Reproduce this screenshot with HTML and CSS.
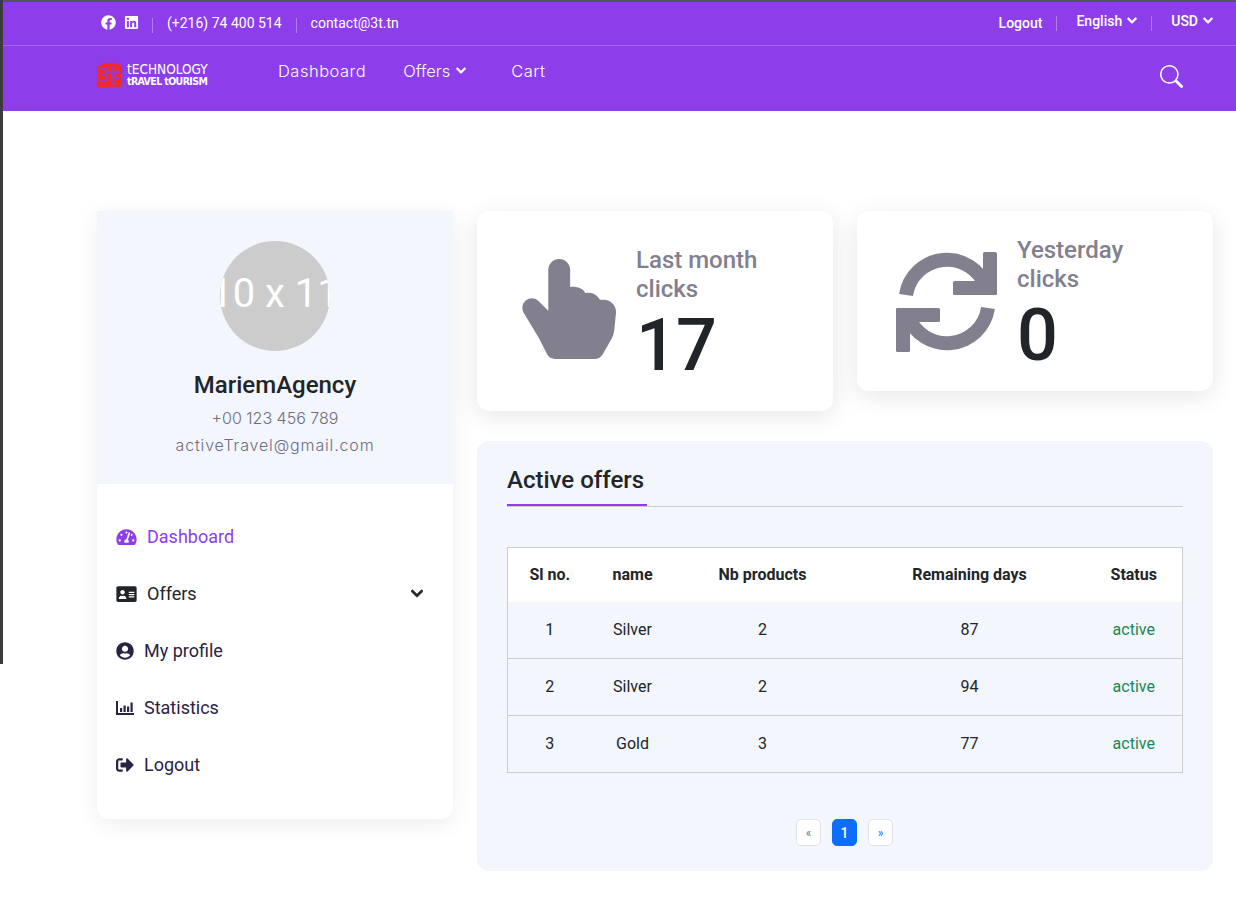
FILE: index.html
```html
<!DOCTYPE html>
<html>
<head>
	<meta name="viewport" content="width=device-width, initial-scale=1">
	<title>Dashboard</title>
	<link rel="stylesheet" href="styles.css">
</head>
<body>
	<div class="page-edge"></div>

	<header class="site-header">
		<div class="topbar">
			<div class="topbar-left">
				<svg class="social" viewBox="0 0 512 512"><path d="M504 256C504 119 393 8 256 8S8 119 8 256c0 123.78 90.69 226.38 209.25 245V327.69h-63V256h63v-54.64c0-62.15 37-96.48 93.67-96.48 27.14 0 55.52 4.84 55.52 4.84v61h-31.28c-30.8 0-40.41 19.12-40.41 38.73V256h68.78l-11 71.69h-57.78V501C413.31 482.38 504 379.78 504 256z"/></svg>
				<svg class="social" viewBox="0 0 448 512"><path d="M416 32H31.9C14.3 32 0 46.5 0 64.3v383.4C0 465.5 14.3 480 31.9 480H416c17.6 0 32-14.5 32-32.3V64.3c0-17.8-14.4-32.3-32-32.3zM135.4 416H69V202.2h66.5V416zm-33.2-243c-21.3 0-38.5-17.3-38.5-38.5S80.9 96 102.2 96c21.2 0 38.5 17.3 38.5 38.5 0 21.3-17.2 38.5-38.5 38.5zm282.1 243h-66.4V312c0-24.8-.5-56.7-34.5-56.7-34.6 0-39.9 27-39.9 54.9V416h-66.4V202.2h63.7v29.2h.9c8.9-16.8 30.6-34.5 62.9-34.5 67.2 0 79.7 44.3 79.7 101.9V416z"/></svg>
				<span class="sep sep-first"></span>
				<span>(+216) 74 400 514</span>
				<span class="sep"></span>
				<span>contact@3t.tn</span>
			</div>
			<div class="topbar-right">
				<a class="top-link">Logout</a>
				<span class="sep"></span>
				<a class="top-link top-raised">English
					<svg class="chev" viewBox="0 0 448 512"><path d="M207.029 381.476L12.686 187.132c-9.373-9.373-9.373-24.569 0-33.941l22.667-22.667c9.357-9.357 24.522-9.375 33.901-.04L224 284.505l154.745-154.021c9.379-9.335 24.544-9.317 33.901.04l22.667 22.667c9.373 9.373 9.373 24.569 0 33.941L240.971 381.476c-9.373 9.372-24.569 9.372-33.942 0z"/></svg>
				</a>
				<span class="sep"></span>
				<a class="top-link top-raised">USD
					<svg class="chev" viewBox="0 0 448 512"><path d="M207.029 381.476L12.686 187.132c-9.373-9.373-9.373-24.569 0-33.941l22.667-22.667c9.357-9.357 24.522-9.375 33.901-.04L224 284.505l154.745-154.021c9.379-9.335 24.544-9.317 33.901.04l22.667 22.667c9.373 9.373 9.373 24.569 0 33.941L240.971 381.476c-9.373 9.372-24.569 9.372-33.942 0z"/></svg>
				</a>
			</div>
		</div>

		<div class="mainbar">
			<div class="logo">
				<svg class="logo-mark" viewBox="0 0 25 24">
					<path fill="#ee2a2e" d="M0 3h4V0h13q6 0 8 5v19H0z"/>
					<path fill="none" stroke="#8d3eea" stroke-width="1.5" d="M3 6h7v5H5m5 0v7H3M15 3v15q0 3 3 3M11 9h12M18 9v6h5"/>
				</svg>
				<div class="logo-text">
					<span class="logo-top">tECHNOLOGY</span>
					<span class="logo-bottom">tRAVEL tOURISM</span>
				</div>
			</div>
			<nav class="main-nav">
				<a class="nav-dashboard">Dashboard</a>
				<a class="nav-offers">Offers
					<svg class="chev" viewBox="0 0 448 512"><path d="M207.029 381.476L12.686 187.132c-9.373-9.373-9.373-24.569 0-33.941l22.667-22.667c9.357-9.357 24.522-9.375 33.901-.04L224 284.505l154.745-154.021c9.379-9.335 24.544-9.317 33.901.04l22.667 22.667c9.373 9.373 9.373 24.569 0 33.941L240.971 381.476c-9.373 9.372-24.569 9.372-33.942 0z"/></svg>
				</a>
				<a>Cart</a>
			</nav>
			<svg class="search" viewBox="0 0 16 16"><path d="M11.742 10.344a6.5 6.5 0 1 0-1.397 1.398h-.001q.044.06.098.115l3.85 3.85a1 1 0 0 0 1.415-1.414l-3.85-3.85a1 1 0 0 0-.115-.1zM12 6.5a5.5 5.5 0 1 1-11 0 5.5 5.5 0 0 1 11 0"/></svg>
		</div>
	</header>

	<main class="content">
		<aside class="sidebar">
			<div class="profile">
				<div class="avatar"><span>110 x 110</span></div>
				<h2 class="profile-name">MariemAgency</h2>
				<p class="profile-line">+00 123 456 789</p>
				<p class="profile-line profile-mail">activeTravel@gmail.com</p>
			</div>
			<ul class="side-menu">
				<li class="active">
					<svg class="side-icon wide" viewBox="0 0 576 512"><path d="M288 32C128.94 32 0 160.94 0 320c0 52.8 14.25 102.26 39.06 144.8 5.61 9.62 16.3 15.2 27.44 15.2h443c11.14 0 21.83-5.58 27.44-15.2C561.75 422.26 576 372.8 576 320c0-159.06-128.94-288-288-288zm0 64c14.71 0 26.58 10.13 30.32 23.65-1.11 2.26-2.64 4.23-3.45 6.67l-9.22 27.67c-5.13 3.49-10.97 6.01-17.64 6.01-17.67 0-32-14.33-32-32S270.33 96 288 96zM96 384c-17.67 0-32-14.33-32-32s14.33-32 32-32 32 14.33 32 32-14.33 32-32 32zm48-160c-17.67 0-32-14.33-32-32s14.33-32 32-32 32 14.33 32 32-14.33 32-32 32zm246.77-72.41l-61.33 184C343.13 347.33 352 364.54 352 384c0 11.72-3.38 22.55-8.88 32H232.88c-5.5-9.45-8.88-20.28-8.88-32 0-33.94 26.5-61.43 59.9-63.59l61.34-184.01c4.17-12.56 17.73-19.45 30.36-15.17 12.57 4.19 19.35 17.79 15.17 30.36zm14.66 57.2l15.52-46.55c3.47-1.29 7.13-2.23 11.05-2.23 17.67 0 32 14.33 32 32s-14.33 32-32 32c-11.38-.01-20.89-6.28-26.57-15.22zM480 384c-17.67 0-32-14.33-32-32s14.33-32 32-32 32 14.33 32 32-14.33 32-32 32z"/></svg>
					Dashboard
				</li>
				<li class="plain">
					<svg class="side-icon wide" viewBox="0 0 576 512"><path fill-rule="evenodd" d="M528 32H48C21.5 32 0 53.5 0 80v352c0 26.5 21.5 48 48 48h480c26.500 0 48-21.500 48-48V80c0-26.500-21.500-48-48-48zM352 200c0-4.400 3.600-8 8-8h144c4.400 0 8 3.600 8 8v16c0 4.400-3.600 8-8 8H360c-4.400 0-8-3.600-8-8v-16zm0 64c0-4.400 3.600-8 8-8h144c4.400 0 8 3.600 8 8v16c0 4.400-3.600 8-8 8H360c-4.400 0-8-3.600-8-8v-16zm0 64c0-4.400 3.600-8 8-8h144c4.400 0 8 3.600 8 8v16c0 4.400-3.600 8-8 8H360c-4.400 0-8-3.600-8-8v-16zM176 144c35.300 0 64 28.700 64 64s-28.700 64-64 64-64-28.700-64-64 28.700-64 64-64zM67.100 376.200C75.500 350.500 99.600 304 128 304h8.200c12.300 5.100 25.700 8 39.800 8s27.600-2.900 39.800-8h8.200c28.400 0 52.500 46.500 60.900 72.200 3.200 9.900-5.200 19.800-15.600 19.800H82.700c-10.400 0-18.800-10-15.600-19.800z"/></svg>
					Offers
					<svg class="menu-chev" viewBox="0 0 448 512"><path d="M207.029 381.476L12.686 187.132c-9.373-9.373-9.373-24.569 0-33.941l22.667-22.667c9.357-9.357 24.522-9.375 33.901-.04L224 284.505l154.745-154.021c9.379-9.335 24.544-9.317 33.901.04l22.667 22.667c9.373 9.373 9.373 24.569 0 33.941L240.971 381.476c-9.373 9.372-24.569 9.372-33.942 0z"/></svg>
				</li>
				<li>
					<svg class="side-icon" viewBox="0 0 496 512"><path d="M248 8C111 8 0 119 0 256s111 248 248 248 248-111 248-248S385 8 248 8zm0 96c48.6 0 88 39.4 88 88s-39.4 88-88 88-88-39.4-88-88 39.4-88 88-88zm0 344c-58.7 0-111.3-26.6-146.5-68.2 18.8-35.4 55.6-59.8 98.5-59.8 2.4 0 4.8.4 7.1 1.1 13 4.2 26.6 6.9 40.9 6.9 14.3 0 28-2.7 40.9-6.9 2.3-.7 4.7-1.1 7.1-1.1 42.9 0 79.7 24.4 98.5 59.8C359.3 421.4 306.7 448 248 448z"/></svg>
					My profile
				</li>
				<li>
					<svg class="side-icon" viewBox="0 0 18 18"><path d="M0 2h2v12h16v2H0zM4 9h2.200v4H4zM7.500 6.500h2.200V13H7.500zM11 7.500h2.200V13H11zM14.500 3.500h2.200V13h-2.200z"/></svg>
					Statistics
				</li>
				<li>
					<svg class="side-icon" viewBox="0 0 512 512"><path d="M497 273L329 441c-15 15-41 4.500-41-17v-96H152c-13.300 0-24-10.700-24-24v-96c0-13.300 10.700-24 24-24h136V88c0-21.400 25.900-32 41-17l168 168c9.300 9.400 9.300 24.600 0 34zM192 436v-40c0-6.600-5.400-12-12-12H96c-17.700 0-32-14.300-32-32V160c0-17.700 14.300-32 32-32h84c6.600 0 12-5.400 12-12V76c0-6.600-5.400-12-12-12H96c-53 0-96 43-96 96v192c0 53 43 96 96 96h84c6.600 0 12-5.400 12-12z"/></svg>
					Logout
				</li>
			</ul>
		</aside>

		<section class="panel">
			<div class="stats">
				<div class="stat-card stat-tall">
					<svg class="stat-hand" viewBox="0 0 16 16"><path d="M8.500 1.750v2.716l.047-.002c.312-.012.742-.016 1.051.046.28.056.543.18.738.288.273.152.456.385.56.642l.132-.012c.312-.024.794-.038 1.158.108.37.148.689.487.88.716q.113.137.195.248h.582a2 2 0 0 1 1.990 2.199l-.272 2.715a3.500 3.500 0 0 1-.444 1.389l-1.395 2.441A1.500 1.500 0 0 1 12.420 16H6.118a1.500 1.500 0 0 1-1.342-.83l-1.215-2.430L1.070 8.589a1.517 1.517 0 0 1 2.373-1.852L5 8.293V1.750a1.750 1.750 0 0 1 3.500 0"/></svg>
					<div class="stat-body">
						<div class="stat-label">Last month clicks</div>
						<div class="stat-value">17</div>
					</div>
				</div>
				<div class="stat-card stat-short">
					<svg class="stat-sync" viewBox="0 0 102 101">
						<path class="sync-arc" d="M10 44A41.500 41.500 0 0 1 90 36M92 57A41.500 41.500 0 0 1 12 65"/>
						<rect x="87" y="1" width="14" height="43" rx="1.500"/>
						<rect x="57" y="30" width="44" height="14" rx="1.500"/>
						<rect x="0" y="57" width="14" height="44" rx="1.500"/>
						<rect x="0" y="57" width="44" height="14" rx="1.500"/>
					</svg>
					<div class="stat-body">
						<div class="stat-label">Yesterday clicks</div>
						<div class="stat-value">0</div>
					</div>
				</div>
			</div>

			<div class="offers">
				<h3 class="offers-title"><span>Active offers</span></h3>
				<table class="offers-table">
					<colgroup>
						<col class="col-no">
						<col class="col-name">
						<col class="col-products">
						<col class="col-days">
						<col class="col-status">
					</colgroup>
					<tr>
						<th>Sl no.</th>
						<th>name</th>
						<th>Nb products</th>
						<th>Remaining days</th>
						<th class="status-cell">Status</th>
					</tr>
					<tr>
						<td>1</td>
						<td>Silver</td>
						<td>2</td>
						<td>87</td>
						<td class="green status-cell">active</td>
					</tr>
					<tr>
						<td>2</td>
						<td>Silver</td>
						<td>2</td>
						<td>94</td>
						<td class="green status-cell">active</td>
					</tr>
					<tr>
						<td>3</td>
						<td>Gold</td>
						<td>3</td>
						<td>77</td>
						<td class="green status-cell">active</td>
					</tr>
				</table>
				<div class="pager">
					<a class="page-prev">«</a>
					<a class="page-on">1</a>
					<a class="page-next">»</a>
				</div>
			</div>
		</section>
	</main>
</body>
</html>
```

FILE: styles.css
```css
body {
	font-family: Roboto, Arial, sans-serif;
	background-color: #fff;
	color: #212529;
	margin: 0;
	padding: 0;
}
a {
	color: inherit;
}

/* the dark strip down the left of the window */
.page-edge {
	position: absolute;
	left: 0;
	top: 0;
	width: 3px;
	height: 664px;
	background-color: #3c3c3c;
}

.site-header {
	margin-left: 3px;
	height: 109px;
	border-top: 2px solid #555;
	background-color: #8d3eea;
	color: #fff;
}
.topbar {
	display: flex;
	justify-content: space-between;
	align-items: center;
	height: 41px;
	padding: 0 23px 2px 98px;
	border-bottom: 1px solid #a566ee;
	font-size: 14px;
}
.topbar-left, .topbar-right {
	display: flex;
	align-items: center;
}
.social {
	width: 15px;
	height: 15px;
	margin-right: 8px;
	fill: #fff;
}
.sep {
	width: 1px;
	height: 15px;
	margin: 6px 14px 0;
	background-color: #b07cf0;
}
.sep-first {
	margin-left: 5px;
}
.topbar-right .sep {
	margin-top: 2px;
}
.top-link {
	font-weight: 500;
}
.top-raised {
	display: flex;
	align-items: center;
	margin: -4px 0 0 5px;
}
.chev {
	width: 10px;
	height: 11px;
	margin-left: 5px;
	fill: #fff;
	stroke: #fff;
	stroke-width: 30;
}

.mainbar {
	display: flex;
	align-items: center;
	height: 65px;
	padding: 0 53px 0 94px;
}
.logo {
	display: flex;
	align-items: center;
	margin-bottom: 7px;
}
.logo-mark {
	width: 25px;
	height: 24px;
}
.logo-text {
	display: flex;
	flex-direction: column;
	margin-left: 5px;
	width: 82px;
	font-family: "DejaVu Sans Condensed", "DejaVu Sans", sans-serif;
	font-stretch: condensed;
	line-height: 12px;
	white-space: nowrap;
}
.logo-top {
	font-size: 13.500px;
}
.logo-bottom {
	font-size: 10.500px;
	font-weight: bold;
	letter-spacing: -0.6px;
}
.main-nav {
	display: flex;
	align-items: center;
	margin: -16px 0 0 69px;
	font-family: Inter, sans-serif;
	font-size: 16.500px;
	font-weight: 300;
	letter-spacing: 0.5px;
}
.nav-dashboard {
	margin-right: 37px;
}
.nav-offers {
	display: flex;
	align-items: center;
	margin-right: 45px;
	letter-spacing: 0;
}
.nav-offers .chev {
	margin-left: 6px;
}
.search {
	width: 23px;
	height: 23px;
	margin: 0 0 4px auto;
	fill: #fff;
}

.content {
	display: flex;
	gap: 24px;
	align-items: flex-start;
	padding: 100px 23px 28px 97px;
}

.sidebar {
	width: 356px;
	flex: none;
	border-radius: 0 0 12px 12px;
	background-color: #fff;
	box-shadow: 0 5px 25px rgba(0, 0, 0, 0.07);
}
.profile {
	display: flex;
	flex-direction: column;
	align-items: center;
	height: 243px;
	padding-top: 30px;
	background-color: #f3f6fd;
}
.avatar {
	display: flex;
	justify-content: center;
	align-items: center;
	box-sizing: border-box;
	width: 110px;
	height: 110px;
	padding-bottom: 6px;
	border-radius: 50%;
	overflow: hidden;
	background-color: #ccc;
	color: #fff;
	font-family: Roboto, sans-serif;
	font-size: 40px;
	white-space: nowrap;
}
.profile-name {
	margin: 19px 0 5px;
	font-size: 24px;
	font-weight: 500;
	line-height: 30px;
}
.profile-line {
	margin: 0;
	font-family: Inter, sans-serif;
	font-size: 16px;
	font-weight: 300;
	line-height: 27px;
	color: #6f6d80;
}
.profile-mail {
	letter-spacing: 0.85px;
}

.side-menu {
	list-style: none;
	margin: 0;
	padding: 24px 0 26px 19px;
	font-size: 18px;
	color: #2a2342;
}
.side-menu li {
	display: flex;
	align-items: center;
	height: 57px;
}
.side-menu .active {
	color: #8d3eea;
}
.side-menu .plain {
	color: #212529;
}
.side-icon {
	width: 18px;
	height: 18px;
	margin-right: 10px;
	fill: currentColor;
}
.side-icon.wide {
	width: 21px;
	margin-right: 10px;
}
.menu-chev {
	width: 12px;
	height: 15px;
	margin: 0 30px 0 auto;
	fill: currentColor;
	stroke: currentColor;
	stroke-width: 30;
}

.panel {
	flex: 1;
	min-width: 0;
}
.stats {
	display: flex;
	gap: 24px;
	align-items: flex-start;
}
.stat-card {
	width: 356px;
	flex: none;
	display: flex;
	align-items: center;
	box-sizing: border-box;
	border-radius: 12px;
	background-color: #fff;
	box-shadow: 0 5px 25px rgba(0, 0, 0, 0.1);
}
.stat-tall {
	height: 200px;
	padding-left: 40px;
}
.stat-short {
	height: 180px;
	padding-left: 39px;
}
.stat-hand {
	width: 100px;
	height: 100px;
	flex: none;
	margin-right: 19px;
	margin-top: -4px;
	fill: #82808f;
}
.stat-sync {
	width: 102px;
	height: 101px;
	flex: none;
	margin-right: 19px;
	fill: #82808f;
}
.sync-arc {
	fill: none;
	stroke: #82808f;
	stroke-width: 14;
}
.stat-body {
	margin-top: 10px;
	width: 170px;
}
.stat-label {
	padding-top: 1px;
	font-size: 24px;
	font-weight: 500;
	line-height: 29px;
	color: #82808f;
}
.stat-value {
	margin-top: -1px;
	font-size: 72px;
	font-weight: 500;
	line-height: 85px;
	letter-spacing: -1px;
}

.offers {
	box-sizing: border-box;
	height: 430px;
	margin-top: 30px;
	padding: 22px 30px 0;
	border-radius: 12px;
	background-color: #f3f6fd;
}
.offers-title {
	margin: 0;
	border-bottom: 1px solid #ccc;
	font-size: 24px;
	font-weight: 500;
	line-height: 34px;
	height: 43px;
}
.offers-title span {
	display: block;
	box-sizing: border-box;
	width: 140px;
	height: 43px;
	border-bottom: 2px solid #8d3eea;
}
.offers-table {
	width: 676px;
	margin-top: 40px;
	border-collapse: collapse;
	table-layout: fixed;
	border: 1px solid #ccc;
	font-size: 16px;
}
.col-no {
	width: 84px;
}
.col-name {
	width: 82px;
}
.col-products {
	width: 178px;
}
.col-days {
	width: 236px;
}
.offers-table th {
	height: 53px;
	padding: 0 0 1px;
	background-color: #fff;
	font-weight: bold;
	text-align: center;
}
.offers-table td {
	height: 54px;
	padding: 0 0 2px;
	border-top: 1px solid #ccc;
	text-align: center;
}
.offers-table tr:nth-child(2) td {
	border-top: none;
}
.offers-table .status-cell {
	padding-right: 2px;
}
.green {
	color: #198754;
}

.pager {
	display: flex;
	justify-content: center;
	gap: 11px;
	margin-top: 46px;
	padding-right: 1px;
}
.pager a {
	display: flex;
	justify-content: center;
	align-items: center;
	box-sizing: border-box;
	width: 25px;
	height: 27px;
	border: 1px solid #dee2e6;
	border-radius: 5px;
	background-color: #fff;
	font-size: 12px;
}
.pager .page-prev {
	color: #6c757d;
}
.pager .page-next {
	color: #0d6efd;
}
.pager .page-on {
	border-color: #0d6efd;
	background-color: #0d6efd;
	color: #fff;
	font-size: 14px;
	font-weight: 500;
}
```
